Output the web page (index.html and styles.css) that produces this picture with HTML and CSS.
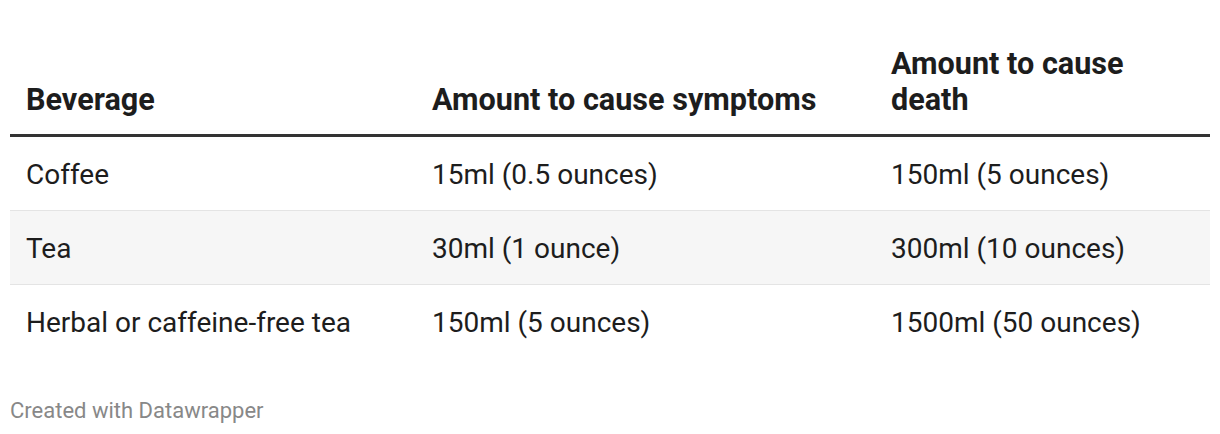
FILE: index.html
```html
<!DOCTYPE html>
<html lang="en">
<head>
<meta charset="utf-8">
<title>Caffeine amounts</title>
<link rel="stylesheet" href="styles.css">
</head>
<body>
<div class="chart">
  <table class="dw-table">
    <colgroup>
      <col class="c1">
      <col class="c2">
      <col class="c3">
    </colgroup>
    <thead>
      <tr>
        <th>Beverage</th>
        <th>Amount to cause symptoms</th>
        <th>Amount to cause death</th>
      </tr>
    </thead>
    <tbody>
      <tr>
        <td>Coffee</td>
        <td>15ml (0.5 ounces)</td>
        <td>150ml (5 ounces)</td>
      </tr>
      <tr class="striped">
        <td>Tea</td>
        <td>30ml (1 ounce)</td>
        <td>300ml (10 ounces)</td>
      </tr>
      <tr class="last">
        <td>Herbal or caffeine-free tea</td>
        <td>150ml (5 ounces)</td>
        <td>1500ml (50 ounces)</td>
      </tr>
    </tbody>
  </table>
  <div class="footer">Created with Datawrapper</div>
</div>
</body>
</html>
```

FILE: styles.css
```css
html, body {
  margin: 0;
  padding: 0;
  background: #ffffff;
}

body {
  font-family: Roboto, "Liberation Sans", Arial, sans-serif;
  color: #1d1d1d;
}

.chart {
  padding: 31px 10px 0 10px;
}

.dw-table {
  width: 1200px;
  border-collapse: collapse;
  table-layout: fixed;
  font-size: 28px;
  line-height: 36px;
}

.c1 { width: 406px; }
.c2 { width: 459px; }
.c3 { width: 335px; }

.dw-table th {
  font-size: 30.6px;
  font-weight: 700;
  text-align: left;
  vertical-align: bottom;
  padding: 15px 16px 16px 16px;
  border-bottom: 3px solid #333333;
}

.dw-table td {
  padding: 20px 16px 17px 16px;
  border-bottom: 1px solid #e4e4e4;
  vertical-align: middle;
}

.dw-table tr.striped td {
  background: #f6f6f6;
}

.dw-table tr.last td {
  border-bottom: none;
}

.footer {
  margin-top: 41px;
  font-size: 22px;
  line-height: 24px;
  color: #888888;
}
```
